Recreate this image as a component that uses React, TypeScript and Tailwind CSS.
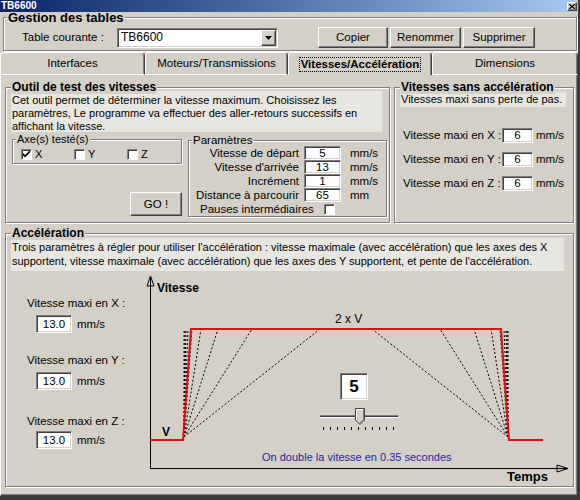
import React from "react";

const sunkenBase =
  "bg-white border border-t-[#808080] border-l-[#808080] border-b-white border-r-white shadow-[inset_1px_1px_0_#404040,inset_-1px_-1px_0_#d4d0c8]";
const raisedBase =
  "bg-[#d4d0c8] border border-t-white border-l-white border-b-[#404040] border-r-[#404040] shadow-[inset_-1px_-1px_0_#808080]";

function Group({
  title,
  className,
  titleClass,
  children,
}: {
  title: string;
  className: string;
  titleClass?: string;
  children?: React.ReactNode;
}) {
  return (
    <div
      className={`relative border border-[#808080] shadow-[inset_1px_1px_0_#ffffff,1px_1px_0_#ffffff] ${className}`}
    >
      <div
        className={`absolute bg-[#d4d0c8] px-[1px] whitespace-nowrap ${
          titleClass ?? "left-[5px] -top-[8px] leading-[14px] font-bold text-[12px]"
        }`}
      >
        {title}
      </div>
      {children}
    </div>
  );
}

function Check({ checked }: { checked?: boolean }) {
  return (
    <span
      className={`inline-flex w-[11px] h-[11px] items-center justify-center bg-white border border-t-[#808080] border-l-[#808080] border-b-white border-r-white shadow-[inset_1px_1px_0_#404040]`}
    >
      {checked && (
        <svg width="7" height="7" viewBox="0 0 7 7">
          <path d="M0 2 L2 4 L7 -1 L7 1.5 L2 6.5 L0 4.5 Z" fill="#000" />
        </svg>
      )}
    </span>
  );
}

function Field({ value, className }: { value: string; className: string }) {
  return (
    <div className={`${sunkenBase} flex items-center justify-center ${className}`}>
      {value}
    </div>
  );
}

function Tab({
  w,
  selected,
  children,
}: {
  w: string;
  selected?: boolean;
  children: React.ReactNode;
}) {
  return (
    <div
      className={`${w} h-full flex items-center justify-center rounded-t-[4px] border-t border-l border-r border-t-white border-l-white border-r-[#404040] shadow-[inset_-1px_0_0_#808080] ${
        selected ? "" : "border-b border-b-white"
      }`}
    >
      {selected ? (
        <span className="font-bold border border-dotted border-black px-[1px] leading-[13px]">
          {children}
        </span>
      ) : (
        <span>{children}</span>
      )}
    </div>
  );
}

function ChartCanvas() {
  const offs = [0, 1, 2, 4, 8, 17, 34, 68, 136];
  return (
    <div className="relative w-[430px] h-[214px]">
      <svg width="430" height="214" className="absolute left-0 top-0">
        <line x1="9.5" y1="8" x2="9.5" y2="197.5" stroke="#000" strokeWidth="1" />
        <line x1="9" y1="197.5" x2="416" y2="197.5" stroke="#000" strokeWidth="1" />
        <polygon points="9.5,5 6,15 13,15" fill="#d4d0c8" stroke="#000" strokeWidth="1" />
        <line x1="9.5" y1="6" x2="9.5" y2="15" stroke="#000" />
        <polygon points="427,197.5 416,194 416,201" fill="#d4d0c8" stroke="#000" strokeWidth="1" />
        <line x1="416" y1="197.5" x2="426" y2="197.5" stroke="#000" />
        {offs.map((o) => (
          <line
            key={"l" + o}
            x1="43"
            y1="166"
            x2={43 + o}
            y2="58"
            stroke="#000"
            strokeWidth="1"
            strokeDasharray="2 2"
          />
        ))}
        {offs.map((o) => (
          <line
            key={"r" + o}
            x1="367"
            y1="166"
            x2={367 - o}
            y2="58"
            stroke="#000"
            strokeWidth="1"
            strokeDasharray="2 2"
          />
        ))}
        <polyline
          points="9,169 42,169 50,58 360,58 368,169 402,169"
          fill="none"
          stroke="#dd1111"
          strokeWidth="2"
        />
      </svg>
      <div className="absolute left-[16px] top-[11px] text-[12px] font-bold leading-[12px]">Vitesse</div>
      <div className="absolute left-[366px] top-[199px] text-[13px] font-bold leading-[14px]">Temps</div>
      <div className="absolute left-[21px] top-[155px] text-[12px] font-bold leading-[12px]">V</div>
      <div className="absolute left-[194px] top-[42px] text-[12px] leading-[12px]">2 x V</div>
      <div
        className={`absolute left-[199px] top-[102px] w-[28px] h-[27px] ${sunkenBase} flex items-center justify-center text-[17px] font-bold`}
      >
        5
      </div>
      <div className="absolute left-[179px] top-[144px] w-[78px] h-[3px] border-t border-t-[#808080] border-b border-b-white bg-[#404040]" />
      <svg width="10" height="17" className="absolute left-[214px] top-[137px]">
        <polygon points="0.5,0.5 9.5,0.5 9.5,12 5,16.5 0.5,12" fill="#d4d0c8" stroke="#404040" strokeWidth="1" />
        <polyline points="1.5,12 1.5,1.5 8.5,1.5" fill="none" stroke="#ffffff" strokeWidth="1" />
        <polyline points="8.5,1.5 8.5,11.5 5,15" fill="none" stroke="#808080" strokeWidth="1" />
      </svg>
      <div className="absolute left-[182px] top-[156px] flex gap-[6px]">
        {Array.from({ length: 11 }).map((_, i) => (
          <div key={i} className="w-[1px] h-[3px] bg-black" />
        ))}
      </div>
      <div className="absolute left-[121px] top-[180px] text-[11px] leading-[13px] text-[#2626a6] whitespace-nowrap">
        On double la vitesse en 0.35 secondes
      </div>
    </div>
  );
}

export default function App() {
  return (
    <div className="w-[580px] h-[500px] bg-[#d4d0c8] flex flex-col overflow-hidden font-['Liberation_Sans',Arial,sans-serif] text-[11px] text-black leading-[13px] border-b-[4px] border-b-[#3a3a3a] border-r-2 border-r-[#3a3a3a]">
      {/* title bar */}
      <div className="h-[12px] flex items-center justify-between bg-linear-to-r from-[#0a246a] to-[#a6caf0] pl-[1px] pr-[1px]">
        <span className="text-white font-bold text-[10px] leading-[12px]">TB6600</span>
        <span className={`${raisedBase} w-[10px] h-[9px] flex items-center justify-center`}>
          <svg width="6" height="5" viewBox="0 0 6 5">
            <path d="M0 0 L6 5 M6 0 L0 5" stroke="#000" strokeWidth="1.3" />
          </svg>
        </span>
      </div>

      {/* Gestion des tables */}
      <Group
        title="Gestion des tables"
        className="mt-[5px] ml-[3px] w-[574px] h-[34px]"
        titleClass="left-[3px] -top-[6px] leading-[12px] font-bold text-[13px]"
      >
        <div className="flex items-center h-[21px] mt-[9px] pl-[18px] text-[11.5px]">
          <span className="w-[95px]">Table courante :</span>
          <div className={`${sunkenBase} w-[161px] h-[20px] flex items-center justify-between pl-[3px] pr-[1px] text-[12px]`}>
            <span>TB6600</span>
            <span className={`${raisedBase} w-[15px] h-[16px] flex items-center justify-center`}>
              <svg width="7" height="4" viewBox="0 0 7 4">
                <path d="M0 0 L7 0 L3.5 4 Z" fill="#000" />
              </svg>
            </span>
          </div>
          <div className="flex gap-[2px] ml-[40px]">
            <button className={`${raisedBase} w-[70px] h-[21px]`}>Copier</button>
            <button className={`${raisedBase} w-[71px] h-[21px]`}>Renommer</button>
            <button className={`${raisedBase} w-[72px] h-[21px]`}>Supprimer</button>
          </div>
        </div>
      </Group>

      {/* tabs */}
      <div className="flex h-[23px] mt-[1px] text-[11.5px]">
        <Tab w="w-[145px]">Interfaces</Tab>
        <Tab w="w-[143px]">Moteurs/Transmissions</Tab>
        <Tab w="w-[144px]" selected>
          Vitesses/Accélération
        </Tab>
        <Tab w="w-[146px]">Dimensions</Tab>
      </div>

      {/* panel */}
      <div className="flex-1 w-[578px] border-l border-l-white border-r border-r-[#404040] border-b border-b-[#404040] shadow-[inset_-1px_-1px_0_#808080] pl-[4px] pt-[12px]">
        <div className="flex gap-[4px] h-[136px]">
          {/* Outil de test */}
          <Group title="Outil de test des vitesses" className="w-[385px] h-[136px]">
            <div className="ml-[5px] mt-[3px] w-[371px] h-[41px] bg-[#e8e6e1] pl-[1px] pt-[3px] leading-[13px] whitespace-nowrap">
              Cet outil permet de déterminer la vitesse maximum. Choisissez les
              <br />
              paramètres, Le programme va effectuer des aller-retours successifs en
              <br />
              affichant la vitesse.
            </div>
            <div className="flex mt-[7px]">
              <div className="ml-[6px] flex flex-col">
                <Group
                  title="Axe(s) testé(s)"
                  className="w-[170px] h-[25px]"
                  titleClass="left-[3px] -top-[7px] leading-[13px]"
                >
                  <div className="flex mt-[8px] ml-[8px]">
                    <label className="w-[53px] flex items-center gap-[3px]">
                      <Check checked /> X
                    </label>
                    <label className="w-[53px] flex items-center gap-[3px]">
                      <Check /> Y
                    </label>
                    <label className="w-[53px] flex items-center gap-[3px]">
                      <Check /> Z
                    </label>
                  </div>
                </Group>
                <button className={`${raisedBase} mt-[28px] ml-[118px] w-[52px] h-[24px] text-[11.5px]`}>
                  GO !
                </button>
              </div>
              <Group
                title="Paramètres"
                className="ml-[6px] mt-[1px] w-[199px] h-[77px]"
                titleClass="left-[3px] -top-[7px] leading-[13px] text-[11.5px]"
              >
                <div className="mt-[5px] flex flex-col text-[11.5px]">
                  {[
                    ["Vitesse de départ", "5", "mm/s"],
                    ["Vitesse d'arrivée", "13", "mm/s"],
                    ["Incrément", "1", "mm/s"],
                    ["Distance à parcourir", "65", "mm"],
                  ].map(([l, v, u]) => (
                    <div key={l} className="flex items-center h-[14px]">
                      <span className="w-[110px] text-right whitespace-nowrap">{l}</span>
                      <Field value={v} className="ml-[5px] w-[37px] h-[14px]" />
                      <span className="ml-[9px]">{u}</span>
                    </div>
                  ))}
                  <div className="flex items-center h-[14px] ml-[11px]">
                    <span className="whitespace-nowrap">Pauses intermédiaires</span>
                    <span className="ml-[10px] flex">
                      <Check />
                    </span>
                  </div>
                </div>
              </Group>
            </div>
          </Group>

          {/* Vitesses sans accélération */}
          <Group title="Vitesses sans accélération" className="w-[180px] h-[136px]">
            <div className="ml-[5px] mt-[4px] w-[166px] h-[15px] bg-[#e8e6e1] pl-[1px] leading-[15px] whitespace-nowrap">
              Vitesses maxi sans perte de pas.
            </div>
            <div className="mt-[21px] flex flex-col gap-[9px] pl-[8px] text-[11.5px]">
              {["X", "Y", "Z"].map((a) => (
                <div key={a} className="flex items-center h-[15px]">
                  <span className="w-[99px] whitespace-nowrap">Vitesse maxi en {a} :</span>
                  <Field value="6" className="w-[31px] h-[15px]" />
                  <span className="ml-[3px]">mm/s</span>
                </div>
              ))}
            </div>
          </Group>
        </div>

        {/* Accélération */}
        <Group title="Accélération" className="mt-[10px] w-[569px] h-[254px]">
          <div className="ml-[5px] mt-[4px] w-[553px] h-[33px] bg-[#e8e6e1] pl-[1px] pt-[2px] leading-[14px] whitespace-nowrap">
            Trois paramètres à régler pour utiliser l'accélération : vitesse maximale (avec accélération) que les axes des X
            <br />
            supportent, vitesse maximale (avec accélération) que les axes des Y supportent, et pente de l'accélération.
          </div>
          <div className="flex">
            <div className="w-[135px] flex flex-col text-[11.5px]">
              <span className="mt-[26px] pl-[21px] leading-[13px] whitespace-nowrap">Vitesse maxi en X :</span>
              <div className="flex items-center mt-[5px] ml-[30px]">
                <Field value="13.0" className="w-[36px] h-[18px]" />
                <span className="ml-[5px]">mm/s</span>
              </div>
              <span className="mt-[21px] pl-[21px] leading-[13px] whitespace-nowrap">Vitesse maxi en Y :</span>
              <div className="flex items-center mt-[5px] ml-[30px]">
                <Field value="13.0" className="w-[36px] h-[18px]" />
                <span className="ml-[5px]">mm/s</span>
              </div>
              <span className="mt-[25px] pl-[21px] leading-[13px] whitespace-nowrap">Vitesse maxi en Z :</span>
              <div className="flex items-center mt-[3px] ml-[30px]">
                <Field value="13.0" className="w-[36px] h-[18px]" />
                <span className="ml-[5px]">mm/s</span>
              </div>
            </div>
            <ChartCanvas />
          </div>
        </Group>
      </div>
    </div>
  );
}
